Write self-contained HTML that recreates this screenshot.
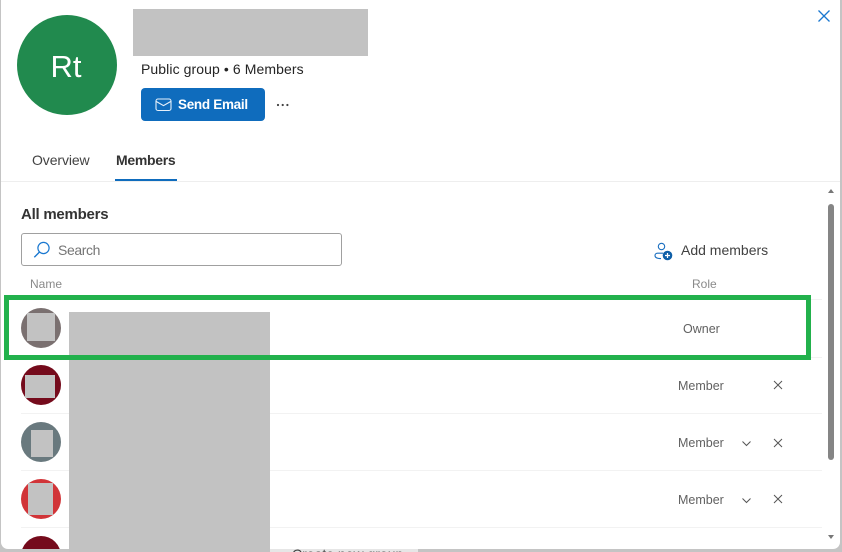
<!DOCTYPE html>
<html>
<head>
<meta charset="utf-8">
<style>
html,body{margin:0;padding:0;width:842px;height:552px;overflow:hidden;}
body{position:relative;background:#c4c4c4;font-family:"Liberation Sans",sans-serif;color:#242424;}
.a{position:absolute;white-space:nowrap;}
.g{position:absolute;background:#c2c2c2;}
.c{position:absolute;border-radius:50%;width:40px;height:40px;left:21px;}
.d{position:absolute;left:21px;width:801px;height:1px;background:#f2f2f2;}
.r{position:absolute;font-size:12.5px;line-height:15px;color:#616161;white-space:nowrap;}
</style>
</head>
<body>
<div class="a" style="left:1px;top:0;width:839px;height:549px;background:#fff;border-radius:0 0 7px 7px;"></div>
<div class="a" style="left:270px;top:549px;width:148px;height:3px;background:#e6e6e6;"></div>
<div class="a" style="left:292px;top:546px;font-size:14px;line-height:17px;color:#424242;">Create new group</div>

<div class="a" style="left:17px;top:15px;width:100px;height:100px;border-radius:50%;background:#218a4e;"></div>
<div class="a" style="left:16px;top:48px;width:100px;text-align:center;font-size:31px;line-height:38px;color:#fff;">Rt</div>
<div class="g" style="left:133px;top:9px;width:235px;height:47px;"></div>
<div class="a" style="left:141px;top:60px;font-size:14px;line-height:18px;letter-spacing:.09px;">Public group • 6 Members</div>

<div class="a" style="left:141px;top:88px;width:124px;height:33px;background:#0f6cbd;border-radius:4px;"></div>
<svg class="a" style="left:155px;top:97px;" width="18" height="16" viewBox="0 0 18 16" fill="none" stroke="#e6f0fa" stroke-width="1.1"><rect x="1" y="2" width="15" height="11.5" rx="2"/><path d="M1.3 4.5 8.5 8.6 15.7 4.5"/></svg>
<div class="a" style="left:178px;top:96px;font-size:13.5px;line-height:18px;font-weight:bold;color:#fff;letter-spacing:-.3px;">Send Email</div>
<svg class="a" style="left:276px;top:103px;" width="14" height="4" viewBox="0 0 14 4" fill="#424242"><circle cx="2" cy="2" r="1.1"/><circle cx="6.7" cy="2" r="1.1"/><circle cx="11.4" cy="2" r="1.1"/></svg>

<svg class="a" style="left:817px;top:9px;" width="14" height="14" viewBox="0 0 14 14" stroke="#1a78d0" stroke-width="1.3" fill="none"><path d="M1.5 1.5 12.5 12.5M12.5 1.5 1.5 12.5"/></svg>

<div class="a" style="left:32px;top:152px;font-size:14px;line-height:17px;color:#424242;letter-spacing:-.1px;">Overview</div>
<div class="a" style="left:116px;top:152px;font-size:14px;line-height:17px;font-weight:bold;color:#333;letter-spacing:-.3px;">Members</div>
<div class="a" style="left:1px;top:181px;width:839px;height:1px;background:#eee;"></div>
<div class="a" style="left:115px;top:179px;width:62px;height:2px;background:#0f6cbd;"></div>

<div class="a" style="left:21px;top:205px;font-size:15px;line-height:19px;font-weight:bold;color:#333;letter-spacing:-.25px;">All members</div>

<div class="a" style="left:21px;top:233px;width:319px;height:31px;border:1px solid #a0a0a0;border-radius:3px;"></div>
<svg class="a" style="left:33px;top:241px;" width="19" height="18" viewBox="0 0 19 18" fill="none" stroke="#1a78d0" stroke-width="1.2"><circle cx="10.5" cy="7" r="5.6"/><path d="M6.5 11 1.3 16.3" stroke-width="1.4"/></svg>
<div class="a" style="left:58px;top:242px;font-size:14px;line-height:17px;color:#757575;letter-spacing:-.4px;">Search</div>

<svg class="a" style="left:654px;top:242px;" width="19" height="19" viewBox="0 0 19 19" fill="none"><circle cx="7.5" cy="4.5" r="3.2" stroke="#1a6fc0" stroke-width="1.1"/><path d="M9 11.2H3.5C2 11.2 1 12.2 1 13.5 1 15.5 3 16.6 7 16.6" stroke="#1a6fc0" stroke-width="1.1"/><circle cx="13.5" cy="13.5" r="4.8" fill="#0f5fa8"/><path d="M13.5 11v5M11 13.5h5" stroke="#fff" stroke-width="1.2"/></svg>
<div class="a" style="left:681px;top:242px;font-size:14px;line-height:17px;color:#424242;">Add members</div>

<div class="a" style="left:30px;top:277px;font-size:12px;line-height:15px;color:#8a8a8a;">Name</div>
<div class="a" style="left:692px;top:277px;font-size:12px;line-height:15px;color:#8a8a8a;">Role</div>

<div class="d" style="top:299px;"></div>
<div class="d" style="top:357px;"></div>
<div class="d" style="top:413px;"></div>
<div class="d" style="top:470px;"></div>
<div class="d" style="top:527px;"></div>

<div class="c" style="top:308px;background:#7a7070;"></div>
<div class="g" style="left:27px;top:313px;width:28px;height:28px;"></div>
<div class="c" style="top:365px;background:#750b1c;"></div>
<div class="g" style="left:25px;top:375px;width:30px;height:23px;"></div>
<div class="c" style="top:422px;background:#69797e;"></div>
<div class="g" style="left:31px;top:430px;width:22px;height:27px;"></div>
<div class="c" style="top:479px;background:#d13438;"></div>
<div class="g" style="left:28px;top:483px;width:25px;height:32px;"></div>
<div class="a" style="left:21px;top:536px;width:40px;height:13px;overflow:hidden;"><div style="width:40px;height:40px;border-radius:50%;background:#750b1c;"></div></div>

<div class="g" style="left:69px;top:312px;width:201px;height:240px;"></div>

<div class="a" style="left:4px;top:295px;width:797px;height:55px;border:5px solid #22b14c;"></div>

<div class="r" style="left:683px;top:322px;">Owner</div>
<div class="r" style="left:678px;top:379px;">Member</div>
<div class="r" style="left:678px;top:436px;">Member</div>
<div class="r" style="left:678px;top:493px;">Member</div>

<svg class="a" style="left:773px;top:380px;" width="10" height="10" viewBox="0 0 10 10" stroke="#555" stroke-width="1" fill="none"><path d="M1 1 9 9M9 1 1 9"/></svg>
<svg class="a" style="left:773px;top:438px;" width="10" height="10" viewBox="0 0 10 10" stroke="#555" stroke-width="1" fill="none"><path d="M1 1 9 9M9 1 1 9"/></svg>
<svg class="a" style="left:773px;top:494px;" width="10" height="10" viewBox="0 0 10 10" stroke="#555" stroke-width="1" fill="none"><path d="M1 1 9 9M9 1 1 9"/></svg>
<svg class="a" style="left:741px;top:440px;" width="11" height="7" viewBox="0 0 11 7" stroke="#555" stroke-width="1" fill="none"><path d="M1.5 1.5 5.5 5.5 9.5 1.5"/></svg>
<svg class="a" style="left:741px;top:497px;" width="11" height="7" viewBox="0 0 11 7" stroke="#555" stroke-width="1" fill="none"><path d="M1.5 1.5 5.5 5.5 9.5 1.5"/></svg>

<svg class="a" style="left:828px;top:189px;" width="6" height="4" viewBox="0 0 6 4" fill="#777"><path d="M3 0 6 4H0Z"/></svg>
<div class="a" style="left:828px;top:204px;width:6px;height:256px;background:#858585;border-radius:3px;"></div>
<svg class="a" style="left:828px;top:535px;" width="6" height="4" viewBox="0 0 6 4" fill="#777"><path d="M0 0H6L3 4Z"/></svg>
</body>
</html>
